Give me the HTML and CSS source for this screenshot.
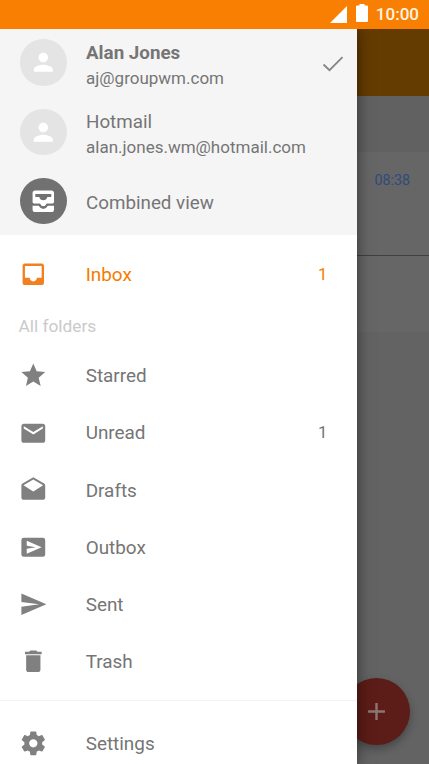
FILE: index.html
```html
<!DOCTYPE html>
<html lang="en">
<head>
<meta charset="utf-8">
<title>Mail</title>
<link rel="stylesheet" href="styles.css">
</head>
<body>
<div class="phone">
  <header class="status">
    <svg class="signal" viewBox="0 0 17 17"><path d="M17 0V17H0Z"/></svg>
    <svg class="battery" viewBox="0 0 12 18"><path d="M3.500 0h5v1.500H11q1 0 1 1V17q0 1-1 1H1q-1 0-1-1V2.500q0-1 1-1h2.500Z"/></svg>
    <span class="clock">10:00</span>
  </header>
  <div class="screen">
    <main class="mail">
      <div class="toolbar"></div>
      <div class="subbar"></div>
      <div class="message"><time>08:38</time></div>
      <div class="message second"></div>
      <div class="fab"><svg viewBox="0 0 24 24"><path d="M19 13h-6v6h-2v-6H5v-2h6V5h2v6h6z"/></svg></div>
    </main>
    <aside class="drawer">
      <section class="accounts">
        <div class="account">
          <span class="avatar"><svg class="icon" viewBox="0 0 24 24"><path d="M12 12c2.210 0 4-1.790 4-4s-1.790-4-4-4-4 1.790-4 4 1.790 4 4 4zm0 2c-2.670 0-8 1.340-8 4v2h16v-2c0-2.660-5.330-4-8-4z"/></svg></span>
          <div class="who"><b class="name">Alan Jones</b><span class="address">aj@groupwm.com</span></div>
          <svg class="check" viewBox="0 0 22 16"><path d="M1.500 8.500L7.500 14.200L20.500 1.200"/></svg>
        </div>
        <div class="account">
          <span class="avatar"><svg class="icon" viewBox="0 0 24 24"><path d="M12 12c2.210 0 4-1.790 4-4s-1.790-4-4-4-4 1.790-4 4 1.790 4 4 4zm0 2c-2.670 0-8 1.340-8 4v2h16v-2c0-2.660-5.330-4-8-4z"/></svg></span>
          <div class="who"><span class="name">Hotmail</span><span class="address">alan.jones.wm@hotmail.com</span></div>
        </div>
        <div class="account">
          <span class="avatar dark"><svg class="icon" viewBox="0 0 24 24"><path fill-rule="evenodd" d="M19 3H5c-1.100 0-2 .9-2 2v7.500c0 1 .9 1.500 2 1.500h4.200c.5 1.500 1.400 2.200 2.800 2.200s2.300-.7 2.800-2.200H19c1.100 0 2-.5 2-1.500V5c0-1.100-.9-2-2-2zM5.300 5.800h13.400v2.600h-3.200c-.6 1.700-1.700 2.800-3.500 2.800s-2.900-1.100-3.500-2.800H5.300z"/><path d="M3 15.600h5.600c.6 1.700 1.700 2.600 3.400 2.600s2.800-.9 3.400-2.600H21V19c0 1.100-.9 2-2 2H5c-1.100 0-2-.9-2-2z"/><path class="gap" d="M3 14.800h5.800c.5 1.500 1.500 2.300 3.200 2.300s2.700-.8 3.200-2.300H21"/></svg></span>
          <span class="name combined">Combined view</span>
        </div>
      </section>
      <nav class="folders">
        <div class="row inbox"><svg class="icon" viewBox="0 0 24 24"><path d="M19 3H4.990c-1.110 0-1.980.89-1.980 2L3 19c0 1.100.88 2 1.990 2H19c1.100 0 2-.9 2-2V5c0-1.110-.9-2-2-2zm0 12h-4c0 1.660-1.350 3-3 3s-3-1.340-3-3H4.990V5H19v10z"/></svg><span class="label">Inbox</span><span class="count">1</span></div>
        <h2 class="heading">All folders</h2>
        <div class="row"><svg class="icon" viewBox="0 0 24 24"><path d="M12 17.270L18.180 21l-1.640-7.030L22 9.240l-7.190-.61L12 2 9.190 8.630 2 9.240l5.460 4.730L5.820 21z"/></svg><span class="label">Starred</span></div>
        <div class="row"><svg class="icon" viewBox="0 0 24 24"><path d="M20 4H4c-1.100 0-1.990.9-1.990 2L2 18c0 1.100.9 2 2 2h16c1.100 0 2-.9 2-2V6c0-1.100-.9-2-2-2zm0 4l-8 5-8-5V6l8 5 8-5v2z"/></svg><span class="label">Unread</span><span class="count">1</span></div>
        <div class="row"><svg class="icon" viewBox="0 0 24 24"><path d="M21.990 8c0-.72-.37-1.350-.94-1.700L12 1 2.950 6.300C2.380 6.650 2 7.280 2 8v10c0 1.100.9 2 2 2h16c1.100 0 2-.9 2-2l-.01-10zM12 13L3.740 7.840 12 3l8.260 4.840L12 13z"/></svg><span class="label">Drafts</span></div>
        <div class="row"><svg class="icon" viewBox="0 0 24 24"><path fill-rule="evenodd" d="M4 4h16a2 2 0 0 1 2 2v12a2 2 0 0 1-2 2H4a2 2 0 0 1-2-2V6a2 2 0 0 1 2-2zM6.500 6.500v4.200l7.500 1.300-7.500 1.300v4.200L19 12z"/></svg><span class="label">Outbox</span></div>
        <div class="row"><svg class="icon" viewBox="0 0 24 24"><path d="M2.010 21L23 12 2.010 3 2 10l15 2-15 2z"/></svg><span class="label">Sent</span></div>
        <div class="row"><svg class="icon" viewBox="0 0 24 24"><path d="M6 19c0 1.100.9 2 2 2h8c1.100 0 2-.9 2-2V7H6v12zM19 4h-3.500l-1-1h-5l-1 1H5v2h14V4z"/></svg><span class="label">Trash</span></div>
      </nav>
      <div class="settings">
        <div class="row"><svg class="icon" viewBox="0 0 24 24"><path d="M19.430 12.980c.04-.32.07-.64.07-.98s-.03-.66-.07-.98l2.110-1.650c.19-.15.24-.42.12-.64l-2-3.460c-.12-.22-.39-.3-.61-.22l-2.490 1c-.52-.4-1.080-.73-1.690-.98l-.38-2.650C14.460 2.180 14.250 2 14 2h-4c-.25 0-.46.18-.49.42l-.38 2.650c-.61.25-1.170.59-1.690.98l-2.490-1c-.23-.09-.49 0-.61.22l-2 3.460c-.13.22-.07.49.12.64l2.110 1.650c-.04.32-.07.65-.07.98s.03.66.07.98l-2.110 1.650c-.19.15-.24.42-.12.64l2 3.460c.12.22.39.3.61.22l2.490-1c.52.4 1.080.73 1.690.98l.38 2.650c.03.24.24.42.49.42h4c.25 0 .46-.18.49-.42l.38-2.650c.61-.25 1.170-.59 1.690-.98l2.490 1c.23.09.49 0 .61-.22l2-3.460c.12-.22.07-.49-.12-.64l-2.110-1.650zM12 15.500c-1.930 0-3.500-1.570-3.500-3.500s1.570-3.500 3.500-3.500 3.500 1.570 3.500 3.500-1.570 3.500-3.500 3.500z"/></svg><span class="label">Settings</span></div>
      </div>
    </aside>
  </div>
</div>
</body>
</html>
```
FILE: styles.css
```css
* { box-sizing: border-box; }
body { margin: 0; font-family: Roboto, sans-serif; color: #757575; overflow: hidden; }
.phone { width: 429px; height: 764px; display: flex; flex-direction: column; overflow: hidden; background: #f97f02; }
.status { height: 28.500px; flex: none; display: flex; align-items: center; justify-content: flex-end; padding-right: 10px; color: #fff4e0; }
.status svg { fill: #fff; }
.signal { width: 17px; height: 17px; margin-right: 9px; }
.battery { width: 12px; height: 18px; margin: -2px 8px 0 0; }
.clock { font-size: 17px; font-weight: 500; line-height: 20px; }
.screen { flex: 1; min-height: 0; position: relative; overflow: hidden; }
.mail { height: 100%; background: #636363; }
.toolbar { height: 67.500px; background: #643b00; }
.subbar { height: 56px; background: #616161; }
.message { height: 103.500px; background: #666; border-bottom: 1px solid #414141; padding: 19.500px 19px 0 0; text-align: right; }
.message.second { height: 76.500px; border: 0; }
.message time { display: block; font-size: 14.300px; line-height: 17px; color: #2f4b7c; }
.fab { position: absolute; left: 343px; top: 649.500px; width: 67px; height: 67px; border-radius: 50%; background: #5c1c17; box-shadow: 0 4px 9px rgba(0,0,0,.3); display: flex; align-items: center; justify-content: center; }
.fab svg { width: 29px; height: 29px; fill: #8c7674; }
.drawer { position: absolute; left: 0; top: 0; width: 356.500px; height: 100%; background: #fff; box-shadow: 0 0 14px rgba(0,0,0,.5); overflow: hidden; }
.accounts { height: 206.500px; background: #f5f5f5; }
.account { height: 69.300px; display: flex; align-items: center; padding: 0 13px 0 20px; }
.avatar { width: 46.500px; height: 46.500px; flex: none; border-radius: 50%; background: #e4e4e4; display: flex; align-items: center; justify-content: center; margin: -1px 19.500px 0 0; }
.avatar .icon { fill: #fff; }
.avatar.dark { background: #717171; }
.avatar .gap { fill: none; stroke: #717171; stroke-width: 1.500; }
.who { display: flex; flex-direction: column; flex: 1; padding-top: 4.500px; }
.name { font-size: 18.800px; line-height: 25px; }
.address { font-size: 17px; line-height: 24px; }
.combined { padding-top: 4px; }
.check { width: 22px; height: 16px; margin-top: 1px; fill: none; stroke: #858585; stroke-width: 1.800; }
.icon { width: 28.600px; height: 28.600px; flex: none; fill: #808080; }
.row { height: 57.200px; display: flex; align-items: center; padding: 0 29px 0 18.700px; }
.label { flex: 1; margin-left: 38.400px; font-size: 18.900px; line-height: 24px; padding-top: 1px; }
.count { font-size: 16.700px; line-height: 24px; padding-top: 1px; }
.folders { padding-top: 11px; }
.inbox { color: #f57c00; }
.inbox .icon { fill: #f08020; }
.heading { margin: 0; height: 44px; padding-left: 18.500px; font-size: 17.300px; font-weight: 400; line-height: 47px; color: #cacaca; }
.settings { margin-top: 9.500px; border-top: 1px solid #f2f2f2; padding-top: 13.500px; }
.settings .label { padding-top: 3px; }
```
